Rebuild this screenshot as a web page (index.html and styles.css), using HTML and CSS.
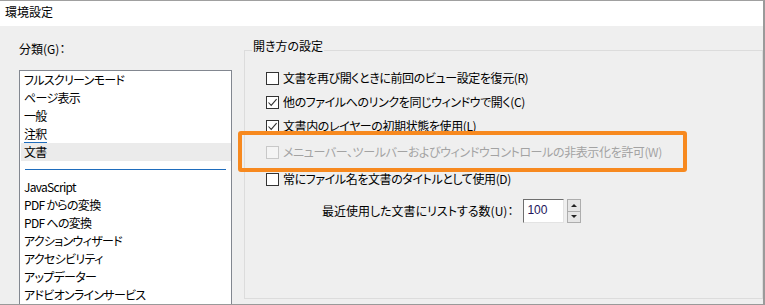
FILE: index.html
```html
<!DOCTYPE html>
<html lang="ja">
<head>
<meta charset="utf-8">
<title>環境設定</title>
<link rel="stylesheet" href="styles.css">
</head>
<body>
<div class="window">
  <div class="titlebar">環境設定</div>
  <div class="body">
    <div class="sidebar">
      <div class="cat-label">分類(G)：</div>
      <div class="listbox">
        <div class="item">フルスクリーンモード</div>
        <div class="item">ページ表示</div>
        <div class="item">一般</div>
        <div class="item"><span class="focus">注釈</span></div>
        <div class="item selected">文書</div>
        <div class="sep"></div>
        <div class="item">JavaScript</div>
        <div class="item">PDF からの変換</div>
        <div class="item">PDF への変換</div>
        <div class="item">アクションウィザード</div>
        <div class="item">アクセシビリティ</div>
        <div class="item">アップデーター</div>
        <div class="item">アドビオンラインサービス</div>
      </div>
    </div>
    <fieldset class="group">
      <legend>開き方の設定</legend>
      <div class="check-row">
        <span class="box"></span>
        <span class="label">文書を再び開くときに前回のビュー設定を復元(R)</span>
      </div>
      <div class="check-row">
        <span class="box"><svg viewBox="0 0 11 11" width="11" height="11"><path d="M1.5 5.5 L4.2 8.4 L9.6 2.2" fill="none" stroke="#333" stroke-width="1.1"/></svg></span>
        <span class="label">他のファイルへのリンクを同じウィンドウで開く(C)</span>
      </div>
      <div class="check-row">
        <span class="box"><svg viewBox="0 0 11 11" width="11" height="11"><path d="M1.5 5.5 L4.2 8.4 L9.6 2.2" fill="none" stroke="#333" stroke-width="1.1"/></svg></span>
        <span class="label">文書内のレイヤーの初期状態を使用(L)</span>
      </div>
      <div class="check-row disabled highlighted">
        <span class="box"></span>
        <span class="label">メニューバー、ツールバーおよびウィンドウコントロールの非表示化を許可(W)</span>
        <span class="callout"></span>
      </div>
      <div class="check-row row-last">
        <span class="box"></span>
        <span class="label">常にファイル名を文書のタイトルとして使用(D)</span>
      </div>
      <div class="spin-row">
        <span class="spin-label">最近使用した文書にリストする数(U)：</span>
        <span class="num-input">100</span>
        <span class="spinner">
          <span class="spin-btn"><span class="tri-up"></span></span>
          <span class="spin-btn"><span class="tri-down"></span></span>
        </span>
      </div>
    </fieldset>
  </div>
</div>
</body>
</html>
```

FILE: styles.css
```css
* { box-sizing: border-box; }
html, body { margin: 0; padding: 0; background: #ffffff; }
body {
  font-family: "Noto Sans CJK JP", "Noto Sans", sans-serif;
  font-size: 12px;
  line-height: 16px;
  color: #000000;
  font-feature-settings: "palt";
}
.window {
  width: 765px;
  height: 305px;
  border-top: 1px solid #a0a0a0;
  border-right: 2px solid #9a9a9a;
  border-bottom: 1px solid #9a9a9a;
  display: flex;
  flex-direction: column;
  overflow: hidden;
}
.titlebar {
  height: 25px;
  line-height: 22px;
  padding-left: 5px;
  background: #ffffff;
  flex-shrink: 0;
}
.body {
  flex: 1;
  background: #efefef;
  display: flex;
  overflow: hidden;
}
.sidebar {
  width: 232px;
  padding-left: 19px;
  flex-shrink: 0;
}
.cat-label {
  padding-top: 15px;
  height: 31px;
}
.listbox {
  margin-top: 13px;
  height: 260px;
  background: #ffffff;
  border: 1px solid #828790;
  padding-left: 1px;
}
.item {
  height: 18px;
  line-height: 18px;
  padding-left: 3px;
  white-space: nowrap;
  letter-spacing: -0.7px;
}
.item.selected {
  background: #ebebeb;
}
.focus {
  display: inline-block;
  line-height: 16px;
  border-bottom: 1px solid #1f6dbd;
}
.sep {
  height: 17px;
  display: flex;
  align-items: center;
  padding: 0 5px 0 4px;
}
.sep::before {
  content: "";
  display: block;
  flex: 1;
  height: 1px;
  background: #1f6dbd;
}
.group {
  flex: 1;
  margin: 12px 0 5px 12px;
  padding: 4px 0 0 0;
  border: 1px solid #dcdcdc;
  min-width: 0;
}
.group legend {
  margin-left: 7px;
  padding: 0 1px 8px 1px;
  line-height: 16px;
}
.check-row {
  height: 24px;
  display: flex;
  align-items: center;
  padding-left: 21px;
  white-space: nowrap;
}
.check-row .label {
  letter-spacing: -0.4px;
}
.check-row.highlighted {
  margin-top: 2px;
  position: relative;
}
.check-row.row-last {
  margin-top: 3px;
}
.box {
  width: 13px;
  height: 13px;
  border: 1px solid #333333;
  background: #ffffff;
  margin-right: 4px;
  display: flex;
  align-items: center;
  justify-content: center;
  flex-shrink: 0;
}
.box svg { display: block; }
.disabled .box {
  border-color: #c8c8c8;
  background: #f4f4f4;
}
.check-row.disabled .label {
  color: #a3a3a3;
}
.callout {
  position: absolute;
  left: -7px;
  top: -9px;
  width: 449px;
  height: 41px;
  border: 4px solid #f7891f;
  border-radius: 3px;
  pointer-events: none;
}
.spin-row {
  margin-top: 8px;
  height: 24px;
  display: flex;
  align-items: center;
  padding-left: 77px;
  white-space: nowrap;
}
.spin-label {
  margin-right: 10px;
}
.num-input {
  width: 41px;
  height: 24px;
  background: #ffffff;
  border-top: 1px solid #6e6e6e;
  border-left: 1px solid #6e6e6e;
  border-right: 1px solid #e3e3e3;
  border-bottom: 1px solid #e3e3e3;
  padding-left: 3px;
  line-height: 21px;
  color: #23145a;
  font-family: "Liberation Sans", "Noto Sans", sans-serif;
  font-size: 12px;
}
.spinner {
  margin-left: 3px;
  width: 14px;
  height: 24px;
  display: flex;
  flex-direction: column;
}
.spin-btn {
  flex: 1;
  background: #e6e6e6;
  border: 1px solid #adadad;
  display: flex;
  align-items: center;
  justify-content: center;
}
.spin-btn + .spin-btn { border-top: none; }
.tri-up {
  width: 0; height: 0;
  border-left: 3px solid transparent;
  border-right: 3px solid transparent;
  border-bottom: 3px solid #222;
}
.tri-down {
  width: 0; height: 0;
  border-left: 3px solid transparent;
  border-right: 3px solid transparent;
  border-top: 3px solid #222;
}
```
